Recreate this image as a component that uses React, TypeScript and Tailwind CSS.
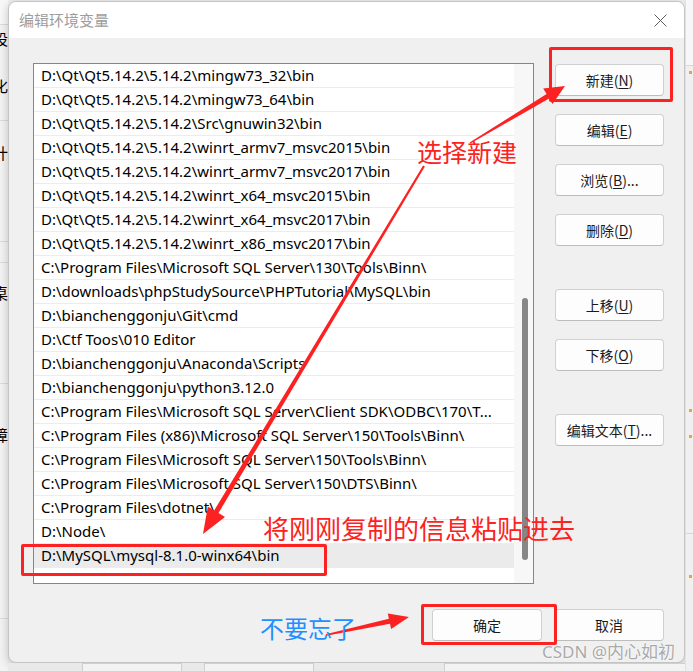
import type { ReactNode } from 'react';

const ROWS = [
  'D:\\Qt\\Qt5.14.2\\5.14.2\\mingw73_32\\bin',
  'D:\\Qt\\Qt5.14.2\\5.14.2\\mingw73_64\\bin',
  'D:\\Qt\\Qt5.14.2\\5.14.2\\Src\\gnuwin32\\bin',
  'D:\\Qt\\Qt5.14.2\\5.14.2\\winrt_armv7_msvc2015\\bin',
  'D:\\Qt\\Qt5.14.2\\5.14.2\\winrt_armv7_msvc2017\\bin',
  'D:\\Qt\\Qt5.14.2\\5.14.2\\winrt_x64_msvc2015\\bin',
  'D:\\Qt\\Qt5.14.2\\5.14.2\\winrt_x64_msvc2017\\bin',
  'D:\\Qt\\Qt5.14.2\\5.14.2\\winrt_x86_msvc2017\\bin',
  'C:\\Program Files\\Microsoft SQL Server\\130\\Tools\\Binn\\',
  'D:\\downloads\\phpStudySource\\PHPTutorial\\MySQL\\bin',
  'D:\\bianchenggonju\\Git\\cmd',
  'D:\\Ctf Toos\\010 Editor',
  'D:\\bianchenggonju\\Anaconda\\Scripts',
  'D:\\bianchenggonju\\python3.12.0',
  'C:\\Program Files\\Microsoft SQL Server\\Client SDK\\ODBC\\170\\T...',
  'C:\\Program Files (x86)\\Microsoft SQL Server\\150\\Tools\\Binn\\',
  'C:\\Program Files\\Microsoft SQL Server\\150\\Tools\\Binn\\',
  'C:\\Program Files\\Microsoft SQL Server\\150\\DTS\\Binn\\',
  'C:\\Program Files\\dotnet\\',
  'D:\\Node\\',
  'D:\\MySQL\\mysql-8.1.0-winx64\\bin',
];
const SELECTED = ROWS.length - 1;

const UI_FONT = 'font-["Noto_Sans","Noto_Sans_CJK_SC",sans-serif]';
const CJK_FONT = 'font-["Noto_Sans_CJK_SC",sans-serif]';

// tapered arrow shaft + head as one polygon
function arrowPoints(
  x1: number, y1: number, x2: number, y2: number,
  head: number, headW: number, tailW: number, shaftW: number,
) {
  const dx = x2 - x1;
  const dy = y2 - y1;
  const len = Math.hypot(dx, dy);
  const ux = dx / len;
  const uy = dy / len;
  const px = -uy;
  const py = ux;
  const bx = x2 - ux * head;
  const by = y2 - uy * head;
  const pts: [number, number][] = [
    [x1 + (px * tailW) / 2, y1 + (py * tailW) / 2],
    [bx + (px * shaftW) / 2, by + (py * shaftW) / 2],
    [bx + px * headW, by + py * headW],
    [x2, y2],
    [bx - px * headW, by - py * headW],
    [bx - (px * shaftW) / 2, by - (py * shaftW) / 2],
    [x1 - (px * tailW) / 2, y1 - (py * tailW) / 2],
  ];
  return pts.map(([x, y]) => `${x.toFixed(1)},${y.toFixed(1)}`).join(' ');
}

function Btn({ children, className = '' }: { children: ReactNode; className?: string }) {
  return (
    <div
      className={`h-[32px] w-[109px] flex items-center justify-center rounded-[4px] border border-[#d0d0d0] border-b-[#bdbdbd] bg-[#fdfdfd] text-[14px] text-[#1b1b1b] ${CJK_FONT} ${className}`}
    >
      {children}
    </div>
  );
}

function Key({ k }: { k: string }) {
  return <span className="underline underline-offset-[2px]">{k}</span>;
}

function LeftStrip() {
  return (
    <div className={`w-[8px] h-full flex flex-col overflow-hidden bg-[#f3f3f3] text-[15px] text-black ${CJK_FONT}`}>
      <div className="h-[25px] bg-[#f8f8f8] border-b border-[#dcdcdc]" />
      <div className="h-[28px] flex items-center justify-end whitespace-nowrap">设</div>
      <div className="h-[18px]" />
      <div className="h-[30px] flex items-center justify-end whitespace-nowrap">化</div>
      <div className="h-[20px] border-b border-[#dcdcdc]" />
      <div className="h-[18px]" />
      <div className="h-[28px] flex items-center justify-end whitespace-nowrap">计</div>
      <div className="h-[75px] border-b border-[#dcdcdc]" />
      <div className="h-[21px] border-b border-[#dcdcdc]" />
      <div className="h-[16px]" />
      <div className="h-[28px] flex items-center justify-end whitespace-nowrap">桌</div>
      <div className="h-[77px] border-b border-[#dcdcdc]" />
      <div className="h-[37px]" />
      <div className="h-[28px] flex items-center justify-end whitespace-nowrap">障</div>
      <div className="h-[170px] border-b border-[#dcdcdc]" />
    </div>
  );
}

function RightStrip() {
  return (
    <div className="flex-1 h-full flex flex-col bg-[#f0f0f0] border-l border-[#e2e2e2]">
      <div className="h-[66px] bg-[#f7f7f7] border-b border-[#d6d6d6]" />
      <div className="h-[12px] flex items-center pl-[3px]">
        <div className="w-[3px] h-[3px] bg-[#e8a33a]" />
      </div>
      <div className="h-[326px]" />
      <div className="h-[12px] flex items-center pl-[3px]">
        <div className="w-[3px] h-[3px] bg-[#e8a33a]" />
      </div>
      <div className="h-[14px]" />
      <div className="h-[12px] flex items-center pl-[3px]">
        <div className="w-[3px] h-[3px] bg-[#e8a33a]" />
      </div>
      <div className="h-[92px] border-b border-[#d6d6d6]" />
      <div className="h-[36px]" />
      <div className="h-[12px] flex items-center pl-[3px]">
        <div className="w-[3px] h-[3px] bg-[#e8a33a]" />
      </div>
      <div className="flex-1" />
    </div>
  );
}

function PathList() {
  return (
    <div className="w-[504px] h-[521px] flex border border-[#868686] bg-white">
      <div className="w-[480px] flex flex-col">
        {ROWS.map((r, i) => (
          <div
            key={r}
            className={`h-[24px] shrink-0 flex items-center pl-[7px] border-b border-[#ececec] text-[15px] text-black whitespace-nowrap overflow-hidden ${UI_FONT} ${
              i === SELECTED ? 'bg-[#ebebeb]' : ''
            }`}
          >
            {r}
          </div>
        ))}
      </div>
      <div className="flex-1 flex flex-col bg-[#f7f7f7] pl-[8px] pt-[234px]">
        <div className="w-[6px] h-[262px] rounded-[3px] bg-[#868686]" />
      </div>
    </div>
  );
}

function Dialog() {
  return (
    <div className="w-[677px] h-[662px] mt-[1px] flex flex-col overflow-hidden rounded-[8px] border border-[#c4c4c4] bg-[#f0f0f0] shadow-[0_2px_10px_rgba(0,0,0,0.22)]">
      <div className="h-[36px] shrink-0 flex items-center justify-between bg-white pl-[10px] pr-[17px]">
        <span className={`text-[15px] text-[#9d9d9d] ${CJK_FONT}`}>编辑环境变量</span>
        <svg width="13" height="13" viewBox="0 0 13 13">
          <path d="M0.5 0.5 L12.5 12.5 M12.5 0.5 L0.5 12.5" stroke="#5c5c5c" strokeWidth="1" fill="none" />
        </svg>
      </div>
      <div className="flex-1 flex flex-col pl-[24px] pr-[20px] pt-[25px]">
        <div className="flex gap-[21px]">
          <PathList />
          <div className="flex flex-col pt-[1px]">
            <Btn>新建(<Key k="N" />)</Btn>
            <Btn className="mt-[18px]">编辑(<Key k="E" />)</Btn>
            <Btn className="mt-[18px]">浏览(<Key k="B" />)...</Btn>
            <Btn className="mt-[18px]">删除(<Key k="D" />)</Btn>
            <Btn className="mt-[43px]">上移(<Key k="U" />)</Btn>
            <Btn className="mt-[18px]">下移(<Key k="O" />)</Btn>
            <Btn className="mt-[43px]">编辑文本(<Key k="T" />)...</Btn>
          </div>
        </div>
        <div className="flex justify-end gap-[12px] mt-[25px]">
          <Btn className="w-[110px]">确定</Btn>
          <Btn className="w-[110px]">取消</Btn>
        </div>
      </div>
    </div>
  );
}

export default function App() {
  const red = '#fc2222';
  return (
    <div className="relative w-[693px] h-[671px] overflow-hidden flex bg-[#f0f0f0]">
      <LeftStrip />
      <div className="flex flex-col h-full">
        <Dialog />
        <div className="flex-1 flex bg-[#e9e9e9]">
          <div className="w-[74px]" />
          <div className="w-[100px] border-l border-t border-r border-[#cfcfcf] bg-[#f3f3f3]" />
          <div className="w-[22px]" />
          <div className="w-[110px] border-l border-t border-r border-[#cfcfcf] bg-[#f3f3f3]" />
          <div className="w-[130px]" />
          <div className="flex-1 border-l border-t border-[#cfcfcf] bg-[#f3f3f3]" />
        </div>
      </div>
      <RightStrip />

      {/* annotation layer */}
      <div className="absolute left-[549px] top-[47px] w-[124px] h-[55px] border-[3px] border-[#fc2222] rounded-[2px] pointer-events-none" />
      <div className="absolute left-[21px] top-[544px] w-[306px] h-[32px] border-[3px] border-[#fc2222] rounded-[2px] pointer-events-none" />
      <div className="absolute left-[421px] top-[604px] w-[136px] h-[41px] border-[3px] border-[#fc2222] rounded-[2px] pointer-events-none" />

      <svg className="absolute left-0 top-0 pointer-events-none" width="693" height="671">
        <polygon points={arrowPoints(470, 143, 565, 86, 20, 9, 1.5, 5)} fill={red} />
        <polygon points={arrowPoints(424, 166, 203, 534, 26, 10, 2, 5)} fill={red} />
        <polygon points={arrowPoints(326, 635, 409, 617, 20, 8, 1.5, 5)} fill={red} />
      </svg>

      <div className={`absolute left-[417px] top-[139px] text-[25px] leading-[25px] text-[#fc2222] whitespace-nowrap ${CJK_FONT}`}>
        选择新建
      </div>
      <div className={`absolute left-[263px] top-[515px] text-[26px] leading-[26px] text-[#fc2222] whitespace-nowrap ${CJK_FONT}`}>
        将刚刚复制的信息粘贴进去
      </div>
      <div className={`absolute left-[260px] top-[616px] text-[24px] leading-[24px] text-[#1e90ff] whitespace-nowrap ${CJK_FONT}`}>
        不要忘了
      </div>
      <div
        className={`absolute left-[542px] top-[642px] text-[17px] leading-[20px] text-[#a9a9a9] whitespace-nowrap ${UI_FONT} [text-shadow:0_0_2px_#ffffff,0_0_1px_#ffffff]`}
      >
        CSDN @内心如初
      </div>
    </div>
  );
}
